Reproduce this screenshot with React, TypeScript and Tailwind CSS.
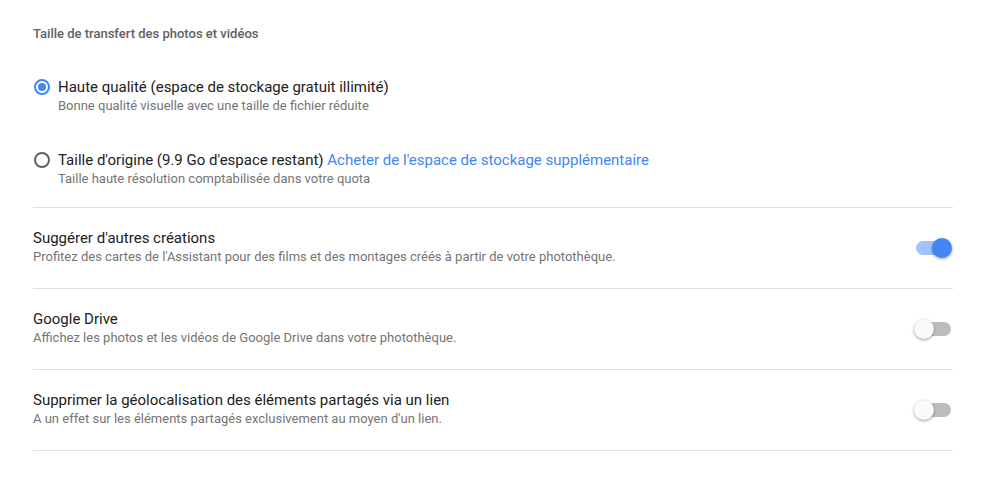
import React from "react";

function Radio({ checked }: { checked: boolean }) {
  return checked ? (
    <div className="w-[16px] h-[16px] rounded-full border-2 border-[#4285f4] flex items-center justify-center shrink-0">
      <div className="w-[8px] h-[8px] rounded-full bg-[#4285f4]" />
    </div>
  ) : (
    <div className="w-[16px] h-[16px] rounded-full border-2 border-[#616161] shrink-0" />
  );
}

function Toggle({ on }: { on: boolean }) {
  return (
    <div className="relative w-[38px] h-[20px] shrink-0">
      <div
        className={
          "absolute left-[2px] right-[1px] top-[3px] h-[14px] rounded-full " +
          (on ? "bg-[#a1c2fa]" : "bg-[#bdbdbd]")
        }
      />
      <div
        className={
          "absolute top-0 w-[20px] h-[20px] rounded-full shadow-[0_1px_3px_rgba(0,0,0,0.4)] " +
          (on ? "right-0 bg-[#4285f4]" : "left-0 bg-[#fafafa]")
        }
      />
    </div>
  );
}

function ToggleRow({ title, sub, on }: { title: string; sub: string; on: boolean }) {
  return (
    <div className="flex items-center justify-between h-[81px] border-b border-[#e0e0e0]">
      <div className="flex flex-col pb-[2px]">
        <div className="text-[15px] leading-[20px] text-[#212121]">{title}</div>
        <div className="text-[13px] leading-[18px] text-[#757575]">{sub}</div>
      </div>
      <div className="mr-[1px]">
        <Toggle on={on} />
      </div>
    </div>
  );
}

export default function App() {
  return (
    <div
      className="w-[1008px] h-[488px] bg-white"
      style={{ fontFamily: "Roboto, 'Liberation Sans', sans-serif" }}
    >
      <div className="ml-[33px] w-[920px] pt-[26px]">
        <div className="text-[13px] leading-[16px] font-medium text-[#616161]">
          Taille de transfert des photos et vidéos
        </div>
        <div className="border-b border-[#e0e0e0] pt-[35px] pb-[19px]">
          <div className="flex items-start">
            <div className="mt-[2px] ml-[1px]">
              <Radio checked={true} />
            </div>
            <div className="ml-[8px]">
              <div className="text-[15px] leading-[20px] text-[#212121]">
                Haute qualité (espace de stockage gratuit illimité)
              </div>
              <div className="text-[13px] leading-[18px] text-[#757575]">
                Bonne qualité visuelle avec une taille de fichier réduite
              </div>
            </div>
          </div>
          <div className="flex items-start mt-[35px]">
            <div className="mt-[2px] ml-[1px]">
              <Radio checked={false} />
            </div>
            <div className="ml-[8px]">
              <div className="text-[15px] leading-[20px] text-[#212121]">
                Taille d'origine (9.9 Go d'espace restant){" "}
                <span className="text-[#4285f4]">
                  Acheter de l'espace de stockage supplémentaire
                </span>
              </div>
              <div className="text-[13px] leading-[18px] text-[#757575]">
                Taille haute résolution comptabilisée dans votre quota
              </div>
            </div>
          </div>
        </div>
        <ToggleRow
          title="Suggérer d'autres créations"
          sub="Profitez des cartes de l'Assistant pour des films et des montages créés à partir de votre photothèque."
          on={true}
        />
        <ToggleRow
          title="Google Drive"
          sub="Affichez les photos et les vidéos de Google Drive dans votre photothèque."
          on={false}
        />
        <ToggleRow
          title="Supprimer la géolocalisation des éléments partagés via un lien"
          sub="A un effet sur les éléments partagés exclusivement au moyen d'un lien."
          on={false}
        />
      </div>
    </div>
  );
}
